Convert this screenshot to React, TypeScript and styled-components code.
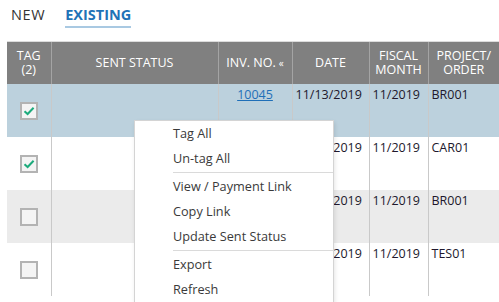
import styled, { createGlobalStyle } from 'styled-components';

const GlobalStyle = createGlobalStyle`
    html, body {
        margin: 0;
        padding: 0;
        background: #ffffff;
        overflow: hidden;
    }
    body {
        font-family: 'Open Sans', 'Noto Sans', sans-serif;
        color: #333333;
    }
`;

const Page = styled.div`
    position: relative;
    width: 499px;
    height: 302px;
    overflow: hidden;
`;

const Tabs = styled.div`
    display: flex;
    gap: 20px;
    padding: 5px 0 0 11px;
    height: 41px;
    box-sizing: border-box;
`;

const Tab = styled.div<{ $active?: boolean }>`
    font-size: 14.5px;
    line-height: 20px;
    height: 21px;
    letter-spacing: ${({ $active }) => ($active ? '0' : '0.6px')};
    font-weight: ${({ $active }) => ($active ? 700 : 400)};
    color: ${({ $active }) => ($active ? '#1f73b7' : '#333333')};
    border-bottom: 2px solid ${({ $active }) => ($active ? '#a9c9e2' : 'transparent')};
`;

const TableWrap = styled.div`
    padding-left: 7px;
`;

const Grid = styled.table`
    border-collapse: collapse;
    table-layout: fixed;
    width: 492px;
    font-size: 12.5px;
`;

const HeadCell = styled.th`
    background: #808080;
    color: #ffffff;
    font-weight: 400;
    text-transform: uppercase;
    line-height: 14px;
    height: 42px;
    padding: 0 1px;
    text-align: center;
    vertical-align: middle;
    white-space: nowrap;
    border-top: 1px solid #dcdcdc;
    border-left: 1px solid #a4a4a4;
    &:first-child {
        border-left: none;
    }
`;

const Sort = styled.span`
    font-size: 10px;
    margin-left: 3px;
`;

const Row = styled.tr<{ $tone: 'selected' | 'plain' | 'alt' }>`
    height: 53px;
    background: ${({ $tone }) =>
        $tone === 'selected' ? '#bcd1dd' : $tone === 'alt' ? '#ebebeb' : '#ffffff'};
`;

const Cell = styled.td<{ $align?: 'left' | 'center' }>`
    vertical-align: top;
    text-align: ${({ $align }) => $align || 'left'};
    padding: 2px 3px 0;
    line-height: 17px;
    color: #21182c;
    white-space: nowrap;
    border-left: 1px solid #c9c9c9;
    &:first-child {
        border-left: none;
    }
`;

const TagCell = styled.td`
    vertical-align: middle;
    text-align: center;
    padding: 0;
`;

const Box = styled.span`
    display: inline-flex;
    align-items: center;
    justify-content: center;
    width: 18px;
    height: 18px;
    box-sizing: border-box;
    border: 2px solid #b3b3b3;
    background: #f4f4f4;
    vertical-align: middle;
    margin-top: 1px;
`;

const InvLink = styled.a`
    color: #1f6fb8;
    text-decoration: underline;
`;

const Menu = styled.ul`
    position: absolute;
    left: 134px;
    top: 120px;
    width: 200px;
    margin: 0;
    padding: 0;
    list-style: none;
    background: #ffffff;
    border: 1px solid #d4d4d4;
    box-sizing: border-box;
    box-shadow: 1px 2px 4px rgba(0, 0, 0, 0.1);
`;

const MenuItem = styled.li`
    height: 25px;
    line-height: 25px;
    padding-left: 38px;
    font-size: 12.7px;
    color: #3a3a3a;
`;

const Divider = styled.li`
    height: 1px;
    margin: 1px 0 1px 38px;
    background: #dadada;
`;

const Check = () => (
    <svg width="12" height="10" viewBox="0 0 12 10">
        <path d="M1.5 5.2 L4.6 8 L10.6 1.8" fill="none" stroke="#1dab7c" strokeWidth="2" />
    </svg>
);

const rows = [
    { tone: 'selected' as const, tagged: true, inv: '10045', date: '11/13/2019', month: '11/2019', project: 'BR001' },
    { tone: 'plain' as const, tagged: true, inv: '10046', date: '11/13/2019', month: '11/2019', project: 'CAR01' },
    { tone: 'alt' as const, tagged: false, inv: '10047', date: '11/13/2019', month: '11/2019', project: 'BR001' },
    { tone: 'plain' as const, tagged: false, inv: '10048', date: '11/13/2019', month: '11/2019', project: 'TES01' },
];

export default function App() {
    return (
        <Page>
            <GlobalStyle />
            <Tabs>
                <Tab>NEW</Tab>
                <Tab $active>EXISTING</Tab>
            </Tabs>
            <TableWrap>
                <Grid>
                    <colgroup>
                        <col style={{ width: 44 }} />
                        <col style={{ width: 167 }} />
                        <col style={{ width: 74 }} />
                        <col style={{ width: 77 }} />
                        <col style={{ width: 59 }} />
                        <col style={{ width: 71 }} />
                    </colgroup>
                    <thead>
                        <tr>
                            <HeadCell>
                                Tag
                                <br />
                                (2)
                            </HeadCell>
                            <HeadCell>Sent Status</HeadCell>
                            <HeadCell>
                                Inv. No.<Sort>«</Sort>
                            </HeadCell>
                            <HeadCell>Date</HeadCell>
                            <HeadCell>
                                Fiscal
                                <br />
                                Month
                            </HeadCell>
                            <HeadCell>
                                Project/
                                <br />
                                Order
                            </HeadCell>
                        </tr>
                    </thead>
                    <tbody>
                        {rows.map((r) => (
                            <Row key={r.inv} $tone={r.tone}>
                                <TagCell>
                                    <Box>{r.tagged && <Check />}</Box>
                                </TagCell>
                                <Cell />
                                <Cell $align="center">
                                    <InvLink href="#">{r.inv}</InvLink>
                                </Cell>
                                <Cell>{r.date}</Cell>
                                <Cell>{r.month}</Cell>
                                <Cell>{r.project}</Cell>
                            </Row>
                        ))}
                    </tbody>
                </Grid>
            </TableWrap>
            <Menu>
                <MenuItem>Tag All</MenuItem>
                <MenuItem>Un-tag All</MenuItem>
                <Divider />
                <MenuItem>View / Payment Link</MenuItem>
                <MenuItem>Copy Link</MenuItem>
                <MenuItem>Update Sent Status</MenuItem>
                <Divider />
                <MenuItem>Export</MenuItem>
                <MenuItem>Refresh</MenuItem>
            </Menu>
        </Page>
    );
}
